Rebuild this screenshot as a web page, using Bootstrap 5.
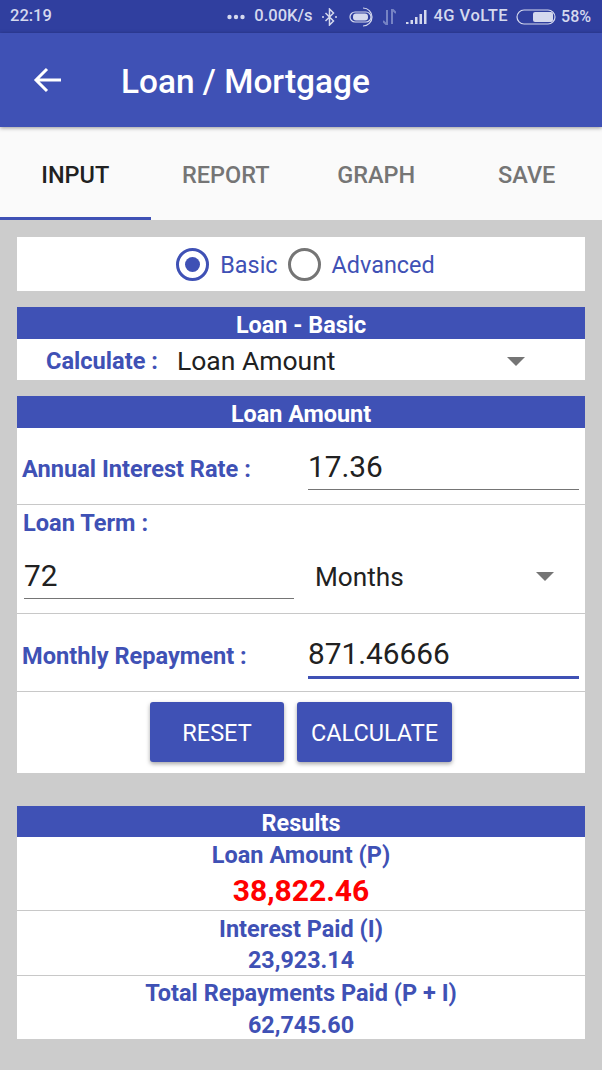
<!DOCTYPE html>
<html lang="en">
<head>
    <meta charset="UTF-8">
    <meta name="viewport" content="width=device-width, initial-scale=1.0">
    <title>Loan / Mortgage</title>
    <link href="https://cdn.jsdelivr.net/npm/bootstrap@5.3.0/dist/css/bootstrap.min.css" rel="stylesheet">
    <style>
        html, body { height: 1070px; overflow: hidden; }
        body { width: 602px; background: #cccccc; font-family: Roboto, "Liberation Sans", sans-serif; color: #3f51b5; }
        .status-bar { height: 33px; background: #303f9f; color: #d5d9ee; font-size: 16px; font-weight: 500; padding: 0 11px 0 10px; }
        .status-bar svg { display: block; }
        .status-wide { font-size: 16.5px; letter-spacing: .5px; margin-left: 6px; }
        .status-net { font-size: 16.5px; }
        .ico-dots { margin-right: 9px; }
        .ico-bt { margin-left: 10px; }
        .ico-hotspot { margin-left: 12px; }
        .ico-arrows { margin-left: 9px; }
        .ico-signal { margin-left: 10px; }
        .ico-batt { margin-left: 8px; margin-right: 5px; }
        .app-bar { height: 94px; background: #3f51b5; color: #fff; box-shadow: 0 1px 4px rgba(0,0,0,.4); position: relative; z-index: 2; }
        .app-bar h1 { font-size: 33.4px; font-weight: 500; margin: 4px 0 0 59px; line-height: 1; }
        .back-icon { margin-left: 33px; }
        .tab-strip { height: 93px; background: #fafafa; }
        .tab-item { width: 150.5px; font-size: 23.5px; font-weight: 500; color: #757575; padding-top: 7px; border-bottom: 3px solid transparent; }
        .tab-item.on { color: #212121; border-bottom-color: #3f51b5; }
        .content-area { padding: 17px 17px 0; }
        .sheet { background: #fff; }
        .mode-row { height: 54px; margin-bottom: 16px; font-size: 23.4px; padding-left: 9px; }
        .mode-row > span { padding-top: 4px; }
        .radio-dot { width: 33px; height: 33px; border: 3px solid #3f51b5; border-radius: 50%; padding: 6px; flex-shrink: 0; }
        .radio-dot.off { border-color: #757575; }
        .radio-dot span { display: block; width: 15px; height: 15px; background: #3f51b5; border-radius: 50%; }
        .mode-gap-a { margin: 0 10px 0 11px; }
        .mode-gap-b { margin-left: 11px; }
        .head-bar { background: #3f51b5; color: #fff; font-size: 23.4px; font-weight: 700; text-align: center; line-height: 36px; height: 32px; }
        .head-bar-res { height: 31px; line-height: 35px; }
        .calc-row { height: 41px; margin-bottom: 16px; padding-top: 4px; }
        .calc-label { margin-left: 29px; }
        .calc-caret { margin-right: 60px; }
        .fld-label { font-size: 23.6px; font-weight: 700; white-space: nowrap; }
        .fld-wide { width: 286px; flex-shrink: 0; }
        .fld-value { font-size: 29.8px; color: #212121; line-height: 1; }
        .pick-value { font-size: 26.2px; color: #212121; line-height: 1; }
        .calc-pick { margin-left: 19px; font-size: 26.5px; }
        .caret-down { width: 0; height: 0; border-left: 9px solid transparent; border-right: 9px solid transparent; border-top: 9px solid #757575; }
        .divider-b { border-bottom: 1px solid #c8c8c8; }
        .line-input { border-bottom: 1px solid #757575; height: 45px; padding-top: 8px; }
        .line-input.active { border-bottom: 3px solid #3f51b5; height: 49px; padding-top: 9px; }
        .rate-row { height: 77px; padding: 16px 6px 0 5px; }
        .rate-row .line-input { height: 46px; }
        .term-row { height: 109px; padding: 1px 7px 0 7px; }
        .term-label { margin-left: -1px; margin-bottom: 13px; }
        .term-row .line-input { padding-top: 7px; }
        .term-num { width: 270px; }
        .term-pick { padding-left: 21px; }
        .pay-row { height: 78px; padding: 16px 6px 0 5px; }
        .pay-label { padding-top: 9px; }
        .btn-row { height: 81px; padding-top: 10px; margin-bottom: 33px; gap: 13px; }
        .flat-btn { background: #3f51b5; color: #fff; font-size: 23.5px; font-weight: 400; height: 60px; padding: 4px 0 0; border: 0; border-radius: 3px; box-shadow: 0 2px 4px rgba(0,0,0,.35); }
        .btn-reset { width: 134px; }
        .btn-calc { width: 155px; }
        .res-cell { text-align: center; font-weight: 700; }
        .res-cell-p { height: 74px; }
        .res-cell-i { height: 65px; }
        .res-cell-t { height: 63px; }
        .res-title { font-size: 23.5px; line-height: 28px; padding-top: 4px; }
        .res-cell-t .res-title { padding-top: 3px; }
        .res-num { font-size: 23.3px; line-height: 30px; padding-top: 2px; }
        .res-cell-t .res-num { padding-top: 3px; }
        .res-big { font-size: 30px; color: #ff0000; line-height: 36px; padding-top: 4px; }
    </style>
</head>
<body>

    <!-- status bar -->
    <div class="status-bar d-flex align-items-center justify-content-between">
        <span class="status-net">22:19</span>
        <div class="d-flex align-items-center">
            <svg class="ico-dots" width="18" height="6" viewBox="0 0 18 6"><circle cx="2.5" cy="3" r="2.2" fill="#d5d9ee"/><circle cx="9" cy="3" r="2.2" fill="#d5d9ee"/><circle cx="15.5" cy="3" r="2.2" fill="#d5d9ee"/></svg>
            <span class="status-net">0.00K/s</span>
            <svg class="ico-bt" width="15" height="18" viewBox="0 0 15 18" fill="none" stroke="#d5d9ee" stroke-width="1.5"><path d="M3.5 5l8 8-4 4V1l4 4-8 8"/><circle cx="1" cy="9" r="1" fill="#d5d9ee" stroke="none"/><circle cx="14" cy="9" r="1" fill="#d5d9ee" stroke="none"/></svg>
            <svg class="ico-hotspot" width="25" height="20" viewBox="0 0 25 20" fill="none" stroke="#d5d9ee"><rect x="1" y="5" width="21" height="10" rx="5" stroke-width="1.2"/><rect x="4" y="6.5" width="15" height="7" rx="3" fill="#d5d9ee" stroke="none"/><path d="M14 1a9 9 0 0 1 0 18" stroke-width="1.2"/></svg>
            <svg class="ico-arrows" width="13" height="16" viewBox="0 0 13 16" fill="none" stroke="#7683c4" stroke-width="2"><path d="M4 16V1M0 12l4 4M9 0v15M9 0l4 4"/></svg>
            <svg class="ico-signal" width="21" height="16" viewBox="0 0 21 16" fill="#d5d9ee"><rect x="0" y="13" width="2.5" height="2"/><rect x="4.500" y="11" width="2.500" height="4"/><rect x="9" y="8" width="2.500" height="7"/><rect x="13.500" y="5" width="2.500" height="10"/><rect x="18" y="1" width="2.500" height="14"/></svg>
            <span class="status-wide">4G VoLTE</span>
            <svg class="ico-batt" width="40" height="16" viewBox="0 0 40 16" fill="none"><rect x="1" y="1" width="38" height="14" rx="7" stroke="#d5d9ee" stroke-width="1.2"/><rect x="17" y="3" width="20" height="10" rx="2" fill="#d5d9ee"/></svg>
            <span>58%</span>
        </div>
    </div>

    <!-- app bar -->
    <div class="app-bar d-flex align-items-center">
        <svg class="back-icon" width="29" height="26" viewBox="0 0 29 26" fill="none" stroke="#fff" stroke-width="3"><path d="M28 13H3M14 2L3 13l11 11"/></svg>
        <h1>Loan / Mortgage</h1>
    </div>

    <!-- tabs -->
    <div class="tab-strip d-flex">
        <div class="tab-item on d-flex align-items-center justify-content-center">INPUT</div>
        <div class="tab-item d-flex align-items-center justify-content-center">REPORT</div>
        <div class="tab-item d-flex align-items-center justify-content-center">GRAPH</div>
        <div class="tab-item d-flex align-items-center justify-content-center">SAVE</div>
    </div>

    <div class="content-area">
        <div class="sheet mode-row d-flex align-items-center justify-content-center">
            <div class="radio-dot"><span></span></div>
            <span class="mode-gap-a">Basic</span>
            <div class="radio-dot off"></div>
            <span class="mode-gap-b">Advanced</span>
        </div>

        <div class="head-bar">Loan - Basic</div>
        <div class="sheet calc-row d-flex align-items-center">
            <span class="fld-label calc-label">Calculate :</span>
            <span class="pick-value calc-pick flex-grow-1">Loan Amount</span>
            <div class="caret-down calc-caret"></div>
        </div>

        <div class="head-bar">Loan Amount</div>
        <div class="sheet rate-row divider-b d-flex">
            <span class="fld-label fld-wide pt-2">Annual Interest Rate :</span>
            <div class="line-input fld-value flex-grow-1">17.36</div>
        </div>
        <div class="sheet term-row divider-b">
            <div class="fld-label term-label">Loan Term :</div>
            <div class="d-flex">
                <div class="line-input fld-value term-num">72</div>
                <div class="d-flex align-items-center flex-grow-1 term-pick">
                    <span class="pick-value flex-grow-1">Months</span>
                    <div class="caret-down me-4"></div>
                </div>
            </div>
        </div>
        <div class="sheet pay-row divider-b d-flex">
            <span class="fld-label fld-wide pay-label">Monthly Repayment :</span>
            <div class="line-input active fld-value flex-grow-1">871.46666</div>
        </div>
        <div class="sheet btn-row d-flex justify-content-center">
            <button class="flat-btn btn-reset">RESET</button>
            <button class="flat-btn btn-calc">CALCULATE</button>
        </div>

        <div class="head-bar head-bar-res">Results</div>
        <div class="sheet res-cell res-cell-p divider-b">
            <div class="res-title">Loan Amount (P)</div>
            <div class="res-big">38,822.46</div>
        </div>
        <div class="sheet res-cell res-cell-i divider-b">
            <div class="res-title">Interest Paid (I)</div>
            <div class="res-num">23,923.14</div>
        </div>
        <div class="sheet res-cell res-cell-t">
            <div class="res-title">Total Repayments Paid (P + I)</div>
            <div class="res-num">62,745.60</div>
        </div>
    </div>

    <script src="https://cdn.jsdelivr.net/npm/bootstrap@5.3.0/dist/js/bootstrap.bundle.min.js"></script>
</body>
</html>
